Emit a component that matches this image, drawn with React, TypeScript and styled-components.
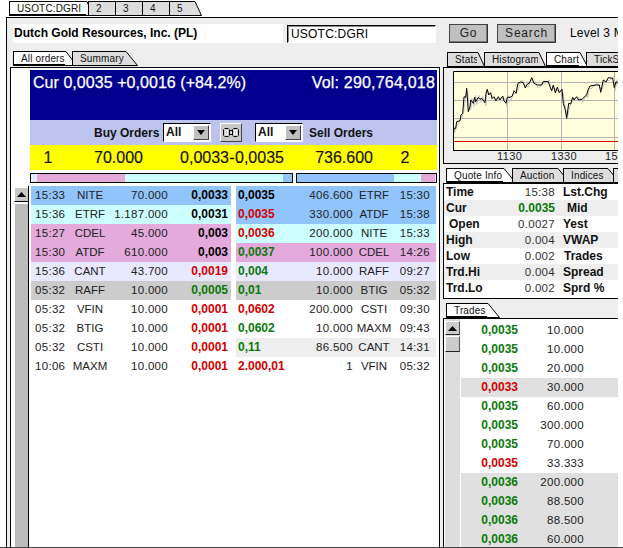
import React from "react";
import styled, { createGlobalStyle } from "styled-components";

const Global = createGlobalStyle`
  html, body { margin: 0; padding: 0; background: #fff; }
  body { font-family: "Liberation Sans", Arial, sans-serif; font-size: 12px; color: #000; }
`;

const Root = styled.div`
  width: 623px; height: 548px; box-sizing: border-box; overflow: hidden; background: #fff;
  border-bottom: 1px solid #444; display: flex; flex-direction: column;
`;
const TopTabs = styled.div`display: flex; height: 17px; padding: 1px 0 0 9px; box-sizing: border-box; flex: none;`;
const Frame = styled.div`
  width: 612px; margin-left: 6px; flex: 1; min-height: 0; box-sizing: border-box;
  background: #eee; border-left: 1px solid #000; border-top: 1px solid #000;
  display: flex; flex-direction: column; overflow: hidden;
`;
const Header = styled.div`display: flex; align-items: stretch; height: 19px; margin: 6px 0 0 6px; flex: none;`;
const NameBox = styled.div`width: 270px; flex: none; background: #fff; font-weight: bold; font-size: 12px; line-height: 19px; padding-left: 1px; box-sizing: border-box;`;
const SymbolInput = styled.div`
  width: 149px; flex: none; margin: 1px 0 0 4px; height: 18px; box-sizing: border-box; background: #fff; border: 1px solid #fff;
  border-top-color: #000; border-left-color: #000; box-shadow: inset 1px 1px 0 #888;
  font-size: 12px; line-height: 16px; padding-left: 3px; letter-spacing: .2px;
`;
const Btn = styled.div<{ $w: number; $ml: number }>`
  width: ${p => p.$w}px; flex: none; margin-left: ${p => p.$ml}px; height: 19px; box-sizing: border-box; background: #c0c0c0;
  border: 1px solid #fff; border-right-color: #333; border-bottom-color: #333; border-top-color: #444; border-left-color: #444;
  box-shadow: inset -1px -1px 0 #777; text-align: center; line-height: 17px; font-size: 12px; letter-spacing: .8px; color: #222;
`;
const Level = styled.div`margin-left: 14px; flex: none; white-space: nowrap; line-height: 19px; font-size: 12px; letter-spacing: .2px;`;
const Body = styled.div`display: flex; flex: 1; min-height: 0; margin: 8px 0 0 3px;`;
const LeftCol = styled.div`width: 430px; display: flex; flex-direction: column; flex: none;`;
const RightCol = styled.div`width: 175px; margin-left: 3px; display: flex; flex-direction: column; flex: none;`;
const TabRow = styled.div<{ $pl: number; $mt?: number; $h?: number }>`display: flex; height: ${p => p.$h ?? 15}px; padding-left: ${p => p.$pl}px; margin-top: ${p => p.$mt ?? 0}px; flex: none;`;
const TabWrap = styled.div<{ $overlap: number }>`display: flex; height: 15px; margin-right: -${p => p.$overlap}px; flex: none;`;
const TabBody = styled.div<{ $active?: boolean; $w: number }>`
  width: ${p => p.$w}px; height: 15px; box-sizing: border-box; background: ${p => (p.$active ? "#fff" : "#ddd")};
  border: 1px solid #000; border-right: none; border-bottom-width: ${p => (p.$active ? 2 : 1)}px;
  font-size: 10px; line-height: 13px; letter-spacing: .15px; white-space: nowrap; padding-left: 7px; color: #111;
`;
function Tab({ label, w, active, overlap = 5, ear = 9 }: { label: string; w: number; active?: boolean; overlap?: number; ear?: number }) {
  return (
    <TabWrap $overlap={overlap}>
      <TabBody $active={active} $w={w}>{label}</TabBody>
      <svg width={ear} height={15} style={{ flex: "none" }}>
        <path d={`M0 .5 L1 .5 L${ear - 0.5} 14.5 L0 14.5Z`} fill={active ? "#fff" : "#ddd"} stroke="none" />
        <path d={`M0 .5 L1 .5 L${ear - 0.5} 14.5 L0 14.5`} fill="none" stroke="#000" />
      </svg>
    </TabWrap>
  );
}

const Panel = styled.div`
  flex: 1; min-height: 0; background: #fff; border: 1px solid #000; border-bottom: none; padding: 2px 1px 0 0; display: flex; flex-direction: column;
`;
const Top = styled.div`margin-left: 19px; width: 407px; flex: none;`;
const Blue = styled.div`
  height: 50px; background: #00008e; color: #fff; font-size: 16px; display: flex; justify-content: space-between;
  padding: 2px 2px 0 3px; box-sizing: border-box; line-height: 22px; letter-spacing: .05px; -webkit-text-stroke: .25px #fff;
`;
const VolText = styled.span`letter-spacing: .2px;`;
const Lavender = styled.div`height: 25px; background: #bcc4ee; display: flex; align-items: center; padding-left: 64px; font-weight: bold; font-size: 12px; color: #111;`;
const LavLabel = styled.div<{ $w: number }>`width: ${p => p.$w}px; flex: none; white-space: nowrap;`;
const Sel = styled.div<{ $ml: number }>`
  width: 48px; height: 19px; margin: 0 6px 0 ${p => p.$ml}px; box-sizing: border-box; background: #fff; border: 1px solid #fff;
  border-top-color: #000; border-left-color: #000; display: flex; justify-content: space-between; font-weight: bold; padding-left: 2px; line-height: 16px; flex: none;
`;
const SelBtn = styled.div`
  width: 16px; height: 15px; margin: 1px 1px 0 0; box-sizing: border-box; background: #c0c0c0; border: 1px solid #fff;
  border-right-color: #444; border-bottom-color: #444; display: flex; align-items: center; justify-content: center;
`;
const LinkBtn = styled.div`
  width: 22px; height: 19px; margin-left: 3px; box-sizing: border-box; background: #c8c8c8; border: 1px solid #fff;
  border-right-color: #444; border-bottom-color: #444; display: flex; align-items: center; justify-content: center; flex: none;
`;
const Yellow = styled.div`
  height: 25px; background: #ffff00; font-size: 16px; line-height: 25px; display: grid; color: #111;
  grid-template-columns: 36px 77px 86px 6px 48px 90px 1fr; -webkit-text-stroke: .15px #111;
`;
const YCell = styled.div<{ $align: string }>`text-align: ${p => p.$align}; white-space: nowrap;`;
const Bars = styled.div`display: flex; gap: 3px; margin-top: 3px; height: 10px;`;
const BarBox = styled.div<{ $w: number }>`width: ${p => p.$w}px; height: 10px; box-sizing: border-box; border: 1px solid #000; display: flex; background: #fff;`;
const BarSeg = styled.div<{ $w: number; $c: string }>`width: ${p => p.$w}px; background: ${p => p.$c}; flex: none;`;

const OrdersArea = styled.div`display: flex; flex: 1; min-height: 0; margin: 3px 0 0 2px;`;
const Scroll = styled.div`width: 14px; flex: none; border-right: 1px solid #000; margin-right: 2px; display: flex; flex-direction: column; margin-left: 1px;`;
const ScrollUp = styled.div`
  height: 15px; box-sizing: border-box; margin-top: 1px; background: #c8c8c8; border-top: 1px solid #fff; border-left: 1px solid #fff; border-bottom: 1px solid #000;
  display: flex; align-items: center; justify-content: center; flex: none;
`;
const ScrollTrack = styled.div`flex: 1; margin: 2px 0 0 1px; background: #bcbcbc;`;
const Tables = styled.div`display: flex; gap: 5px;`;
const Table = styled.div`width: 200px; display: flex; flex-direction: column;`;
const BuyRow = styled.div<{ $bg: string }>`
  height: 19px; line-height: 19px; background: ${p => p.$bg}; display: grid; grid-template-columns: 36px 46px 55px 60px; padding-right: 3px; color: #222; white-space: nowrap;
`;
const SellRow = styled.div<{ $bg: string }>`
  height: 19px; line-height: 19px; background: ${p => p.$bg}; display: grid; grid-template-columns: 48px 67px 42px 35px; padding: 0 6px 0 2px; color: #222; white-space: nowrap;
`;
const Time = styled.div<{ $right?: boolean }>`font-size: 11.5px; letter-spacing: .3px; padding-left: ${p => (p.$right ? 0 : 4)}px; text-align: ${p => (p.$right ? "right" : "left")};`;
const Name = styled.div`text-align: center; font-size: 11.5px;`;
const Qty = styled.div`text-align: right; font-size: 11.5px; letter-spacing: .3px;`;
const Price = styled.div<{ $c: string; $right?: boolean }>`font-weight: bold; color: ${p => p.$c}; text-align: ${p => (p.$right ? "right" : "left")};`;

const ChartPanel = styled.div`
  height: 97px; box-sizing: border-box; flex: none; border: 1px solid #000; border-right: none; background: #eee; padding: 3px 0 0 9px;
`;
const QuotePanel = styled.div`
  height: 116px; box-sizing: border-box; flex: none; border: 1px solid #000; border-right: none; background: #fff;
`;
const QuoteRow = styled.div<{ $alt: boolean }>`
  height: 16px; line-height: 16px; background: ${p => (p.$alt ? "#eee" : "#fff")}; display: grid; grid-template-columns: 111px 1fr; white-space: nowrap; color: #222;
`;
const QCell = styled.div<{ $c?: string; $bold?: boolean }>`
  text-align: right; color: ${p => p.$c ?? "#333"}; font-weight: ${p => (p.$bold ? "bold" : "normal")};
  font-size: ${p => (p.$bold ? 12 : 11.5)}px; letter-spacing: ${p => (p.$bold ? 0 : 0.3)}px;
`;
const QLabel = styled.div<{ $indent: number }>`font-weight: bold; padding-left: ${p => p.$indent}px; color: #111;`;
const QLead = styled.div<{ $indent: number }>`display: grid; grid-template-columns: 52px 1fr; padding-left: ${p => p.$indent}px;`;
const TradesPanel = styled.div`
  flex: 1; min-height: 0; border: 1px solid #000; border-right: none; border-bottom: none; background: #fff; display: flex; overflow: hidden;
`;
const TradeScroll = styled.div`width: 15px; margin-left: 1px; background: #ddd; flex: none; display: flex; flex-direction: column; padding-top: 2px;`;
const TradeUp = styled.div`
  height: 14px; box-sizing: border-box; background: #ccc; border: 1px solid #fff; border-right-color: #555; border-bottom-color: #222;
  display: flex; align-items: center; justify-content: center;
`;
const TradeThumb = styled.div`
  height: 16px; margin-top: 1px; box-sizing: border-box; background: #ccc; border: 1px solid #fff; border-right-color: #555; border-bottom-color: #222;
`;
const TradeRows = styled.div`flex: 1; margin-left: 1px; padding-top: 2px;`;
const TradeRow = styled.div<{ $alt: boolean }>`
  height: 19px; line-height: 19px; background: ${p => (p.$alt ? "#e0e0e0" : "#fff")}; display: grid; grid-template-columns: 57px 66px; color: #222;
`;

const G = "#0a7a0a", R = "#d40000", K = "#000";
const buy: [string, string, string, string, string, string][] = [
  ["#90c4fb", "15:33", "NITE", "70.000", "0,0033", K],
  ["#ccffff", "15:36", "ETRF", "1.187.000", "0,0031", K],
  ["#e4aadc", "15:27", "CDEL", "45.000", "0,003", K],
  ["#e4aadc", "15:30", "ATDF", "610.000", "0,003", K],
  ["#e8e8ff", "15:36", "CANT", "43.700", "0,0019", R],
  ["#cccccc", "05:32", "RAFF", "10.000", "0,0005", G],
  ["#fff", "05:32", "VFIN", "10.000", "0,0001", R],
  ["#fff", "05:32", "BTIG", "10.000", "0,0001", R],
  ["#fff", "05:32", "CSTI", "10.000", "0,0001", R],
  ["#fff", "10:06", "MAXM", "10.000", "0,0001", R],
];
const sell: [string, string, string, string, string, string][] = [
  ["#90c4fb", "0,0035", K, "406.600", "ETRF", "15:30"],
  ["#90c4fb", "0,0035", R, "330.000", "ATDF", "15:38"],
  ["#ccffff", "0,0036", R, "200.000", "NITE", "15:33"],
  ["#e4aadc", "0,0037", G, "100.000", "CDEL", "14:26"],
  ["#e8e8ff", "0,004", G, "10.000", "RAFF", "09:27"],
  ["#cccccc", "0,01", G, "10.000", "BTIG", "05:32"],
  ["#fff", "0,0602", R, "200.000", "CSTI", "09:30"],
  ["#fff", "0,0602", G, "10.000", "MAXM", "09:43"],
  ["#eeeeee", "0,11", G, "86.500", "CANT", "14:31"],
  ["#fff", "2.000,01", R, "1", "VFIN", "05:32"],
];
const quotes: [string, number, string, string?, boolean?][] = [
  ["Time", 2, "15:38"],
  ["Cur", 2, "0.0035", G, true],
  ["Open", 5, "0.0027"],
  ["High", 2, "0.004"],
  ["Low", 2, "0.002"],
  ["Trd.Hi", 2, "0.004"],
  ["Trd.Lo", 2, "0.002"],
];
const quotes2: [string, number][] = [["Lst.Chg", 8], ["Mid", 12], ["Yest", 8], ["VWAP", 8], ["Trades", 9], ["Spread", 8], ["Sprd %", 8]];
const trades: [string, string, string, boolean][] = [
  ["0,0035", G, "10.000", false], ["0,0035", G, "10.000", false], ["0,0035", G, "20.000", false],
  ["0,0033", R, "30.000", true], ["0,0035", G, "60.000", false], ["0,0035", G, "300.000", false],
  ["0,0035", G, "70.000", false], ["0,0035", R, "33.333", false], ["0,0036", G, "200.000", true],
  ["0,0036", G, "88.500", true], ["0,0036", G, "88.500", true], ["0,0036", G, "60.000", true],
];

const UpArrow = () => (
  <svg width="9" height="5"><path d="M4.5 0 L9 5 L0 5Z" fill="#000" /></svg>
);
const DownArrow = () => (
  <svg width="8" height="5"><path d="M0 0 L8 0 L4 5Z" fill="#000" /></svg>
);
const ChainIcon = () => (
  <svg width="18" height="13" viewBox="0 0 18 13" fill="none">
    <path d="M2.5 2.5 H6.5 M2.5 10.5 H6.5 M11.5 2.5 H15.5 M11.5 10.5 H15.5 M1.5 3.5 V9.5 M7.5 3.5 V9.5 M10.5 3.5 V9.5 M16.5 3.5 V9.5 M7.5 4.5 H10.5 M7.5 8.5 H10.5" stroke="#000" />
    <path d="M3.5 4.5 H5.5 V8.5 H3.5Z M12.5 4.5 H14.5 V8.5 H12.5Z M8 6.5 H10" stroke="#fff" />
  </svg>
);

const zp: [number, number][] = [[520,405],[522,385],[527,385],[530,365],[540,362],[543,345],[548,340],[552,290],[557,292],[560,265],[565,335],[570,320],[572,300],[580,310],[584,292],[587,305],[595,292],[600,298],[605,295],[615,308],[618,280],[622,268],[626,285],[632,278],[636,296],[642,290],[648,302],[655,290],[660,300],[668,288],[672,302],[678,310],[682,292],[690,292],[697,288],[702,272],[708,280],[714,250],[722,246],[730,248],[736,264],[742,252],[748,250],[755,233],[762,250],[772,255],[785,255],[790,244],[805,245],[810,260],[815,272],[820,255],[826,278],[832,262],[838,278],[846,268],[850,310],[856,330],[860,355],[866,310],[872,312],[878,292],[882,300],[890,290],[896,300],[906,298],[914,290],[920,285],[924,270],[930,258],[948,255],[958,255],[962,277],[970,240],[978,246],[985,233],[998,235],[1003,263],[1008,245],[1014,250]];
const toLocal = (a: [number, number]): [number, number] => [280 + a[0] / 3 - 453, a[1] / 3 - 71];
const linePts = zp.map(toLocal).map(p => `${p[0].toFixed(1)},${p[1].toFixed(1)}`).join(" ");
const shadowPts = zp.map(toLocal).map((p, i) => `${(p[0] + 1).toFixed(1)},${(p[1] + (i % 2 ? 3 : -2)).toFixed(1)}`).join(" ");

const Chart = () => (
  <svg width="165" height="91" style={{ display: "block" }}>
    <rect x="0" y="0" width="165" height="79" fill="#ffffdc" />
    {[11.5, 29.5, 47.5, 66.5].map(y => <line key={y} x1="0" x2="165" y1={y} y2={y} stroke="#b4b4b4" />)}
    {[54.5, 108.5, 161.5].map(x => <line key={x} x1={x} x2={x} y1="0" y2="79" stroke="#b4b4b4" />)}
    <line x1="0" x2="165" y1="70.5" y2="70.5" stroke="#e00000" />
    <polyline points={shadowPts} fill="none" stroke="#c4c4c4" />
    <polyline points={linePts} fill="none" stroke="#000" />
    <path d="M.5 79 V.5 H165 M0 79.5 H165" fill="none" stroke="#000" />
    <g fontFamily='"Liberation Sans", Arial, sans-serif' fontSize="11" letterSpacing=".4" fill="#222">
      <text x="44" y="89">1130</text>
      <text x="98" y="89">1330</text>
      <text x="152" y="89">153</text>
    </g>
  </svg>
);

export default function App() {
  return (
    <Root>
      <Global />
      <TopTabs>
        <Tab label="USOTC:DGRI" w={77} active ear={7} overlap={5} />
        <Tab label="2" w={26} ear={8} overlap={7} />
        <Tab label="3" w={26} ear={8} overlap={7} />
        <Tab label="4" w={26} ear={8} overlap={7} />
        <Tab label="5" w={25} ear={8} overlap={0} />
      </TopTabs>
      <Frame>
        <Header>
          <NameBox>Dutch Gold Resources, Inc. (PL)</NameBox>
          <SymbolInput>USOTC:DGRI</SymbolInput>
          <Btn $w={39} $ml={13}>Go</Btn>
          <Btn $w={59} $ml={9}>Search</Btn>
          <Level>Level 3 M</Level>
        </Header>
        <Body>
          <LeftCol>
            <TabRow $pl={3} $h={16}>
              <Tab label="All orders" w={52} active ear={12} overlap={5} />
              <Tab label="Summary" w={53} ear={13} overlap={0} />
            </TabRow>
            <Panel>
              <Top>
                <Blue><span>Cur 0,0035 +0,0016 (+84.2%)</span><VolText>Vol: 290,764,018</VolText></Blue>
                <Lavender>
                  <LavLabel $w={69}>Buy Orders</LavLabel>
                  <Sel $ml={0}>All<SelBtn><DownArrow /></SelBtn></Sel>
                  <LinkBtn><ChainIcon /></LinkBtn>
                  <Sel $ml={13}>All<SelBtn><DownArrow /></SelBtn></Sel>
                  <LavLabel $w={64}>Sell Orders</LavLabel>
                </Lavender>
                <Yellow>
                  <YCell $align="center">1</YCell>
                  <YCell $align="right">70.000</YCell>
                  <YCell $align="right">0,0033</YCell>
                  <YCell $align="center">-</YCell>
                  <YCell $align="left">0,0035</YCell>
                  <YCell $align="right">736.600</YCell>
                  <YCell $align="center">2</YCell>
                </Yellow>
                <Bars>
                  <BarBox $w={263}>
                    <BarSeg $w={6} $c="#e8e8ff" /><BarSeg $w={88} $c="#e4aadc" /><BarSeg $w={158} $c="#ccffff" /><BarSeg $w={9} $c="#90c4fb" />
                  </BarBox>
                  <BarBox $w={141}>
                    <BarSeg $w={97} $c="#90c4fb" /><BarSeg $w={27} $c="#ccffff" /><BarSeg $w={14} $c="#e4aadc" /><BarSeg $w={1} $c="#e8e8ff" />
                  </BarBox>
                </Bars>
              </Top>
              <OrdersArea>
                <Scroll>
                  <ScrollUp><UpArrow /></ScrollUp>
                  <ScrollTrack />
                </Scroll>
                <Tables>
                  <Table>
                    {buy.map((r, i) => (
                      <BuyRow key={i} $bg={r[0]}>
                        <Time>{r[1]}</Time><Name>{r[2]}</Name><Qty>{r[3]}</Qty><Price $c={r[5]} $right>{r[4]}</Price>
                      </BuyRow>
                    ))}
                  </Table>
                  <Table>
                    {sell.map((r, i) => (
                      <SellRow key={i} $bg={r[0]}>
                        <Price $c={r[2]}>{r[1]}</Price><Qty>{r[3]}</Qty><Name>{r[4]}</Name><Time $right>{r[5]}</Time>
                      </SellRow>
                    ))}
                  </Table>
                </Tables>
              </OrdersArea>
            </Panel>
          </LeftCol>
          <RightCol>
            <TabRow $pl={4} $mt={1}>
              <Tab label="Stats" w={30} ear={8} overlap={1} />
              <Tab label="Histogram" w={54} ear={8} overlap={0} />
              <Tab label="Chart" w={33} active ear={9} overlap={2} />
              <Tab label="TickS" w={40} ear={8} overlap={0} />
            </TabRow>
            <ChartPanel><Chart /></ChartPanel>
            <TabRow $pl={3} $mt={4}>
              <Tab label="Quote Info" w={57} active ear={13} overlap={4} />
              <Tab label="Auction" w={45} ear={13} overlap={7} />
              <Tab label="Indices" w={44} ear={13} overlap={7} />
              <Tab label="" w={20} ear={8} overlap={0} />
            </TabRow>
            <QuotePanel>
              {quotes.map((q, i) => (
                <QuoteRow key={q[0]} $alt={i % 2 === 1}>
                  <QLead $indent={q[1]}>
                    <QLabel $indent={0}>{q[0]}</QLabel>
                    <QCell $c={q[3]} $bold={q[4]}>{q[2]}</QCell>
                  </QLead>
                  <QLabel $indent={quotes2[i][1]}>{quotes2[i][0]}</QLabel>
                </QuoteRow>
              ))}
            </QuotePanel>
            <TabRow $pl={3} $mt={4}>
              <Tab label="Trades" w={41} active ear={13} overlap={0} />
            </TabRow>
            <TradesPanel>
              <TradeScroll>
                <TradeUp><UpArrow /></TradeUp>
                <TradeThumb />
              </TradeScroll>
              <TradeRows>
                {trades.map((t, i) => (
                  <TradeRow key={i} $alt={t[3]}>
                    <Price $c={t[1]} $right>{t[0]}</Price><Qty>{t[2]}</Qty>
                  </TradeRow>
                ))}
              </TradeRows>
            </TradesPanel>
          </RightCol>
        </Body>
      </Frame>
    </Root>
  );
}
